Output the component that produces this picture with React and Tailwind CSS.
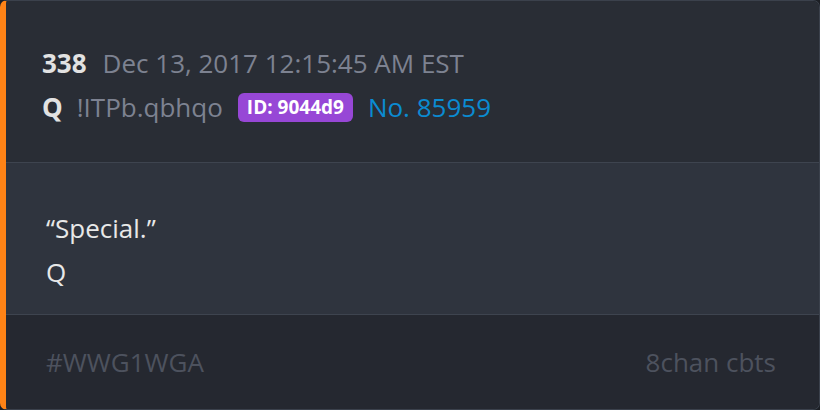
export default function App() {
  return (
    <div className="w-[820px] h-[410px] bg-[#1c1f25]" style={{ fontFamily: '"Open Sans", "Noto Sans", sans-serif' }}>
      <div className="w-[820px] h-[410px] rounded-[7px] border border-[#3b414c] border-l-[6px] border-l-[#ff8316] overflow-hidden flex flex-col">
        <div className="bg-[#292d35] h-[162px] pl-[36px] pt-[40px] border-b border-[#3e444f] text-[26px]">
          <div className="h-[44px] flex items-center">
            <span className="font-bold text-[#e2e2e2]">338</span>
            <span className="ml-[16px] text-[#7d8291]">Dec 13, 2017 12:15:45 AM EST</span>
          </div>
          <div className="h-[44px] flex items-center">
            <span className="font-bold text-[#e2e2e2]">Q</span>
            <span className="ml-[14px] text-[#7d8291]">!ITPb.qbhqo</span>
            <span className="ml-[15px] h-[29px] px-[9px] rounded-[6px] bg-[#9747d6] text-white font-bold text-[19px] flex items-center">ID: 9044d9</span>
            <span className="ml-[15px] text-[#0b8bd1]">No. 85959</span>
          </div>
        </div>
        <div className="bg-[#2f343e] h-[152px] pl-[40px] pt-[43px] border-b border-[#3e444f] text-[26px] text-[#e8e8e8]">
          <div className="h-[44px] flex items-center">“Special.”</div>
          <div className="h-[45px] flex items-center">Q</div>
        </div>
        <div className="bg-[#252830] flex-1 pl-[40px] pr-[43px] flex items-center justify-between text-[26px] text-[#4d525e]">
          <span>#WWG1WGA</span>
          <span>8chan cbts</span>
        </div>
      </div>
    </div>
  );
}
